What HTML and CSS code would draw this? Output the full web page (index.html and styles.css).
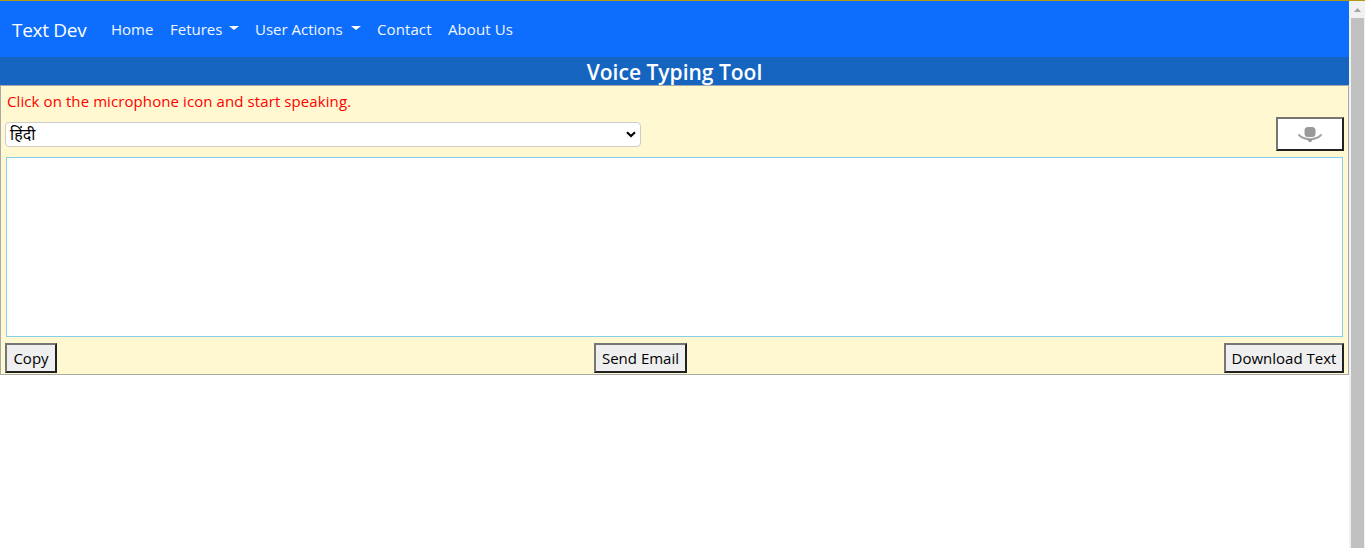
FILE: index.html
```html
<!DOCTYPE html>
<html lang="en">
<head>
<meta charset="utf-8">
<title>Voice Typing Tool</title>
<link rel="stylesheet" href="styles.css">
</head>
<body>
<div class="window">
  <main class="page">
    <nav class="navbar">
      <a class="brand">Text Dev</a>
      <a class="link home">Home</a>
      <a class="link features"><span>Fetures</span><i class="caret"></i></a>
      <a class="link actions"><span>User Actions</span><i class="caret"></i></a>
      <a class="link contact">Contact</a>
      <a class="link about">About Us</a>
    </nav>
    <h1 class="title"><span>Voice Typing Tool</span></h1>
    <section class="tool">
      <p class="hint">Click on the microphone icon and start speaking.</p>
      <div class="controls">
        <div class="select"><span class="language">हिंदी</span>
          <svg width="10" height="7" viewBox="0 0 10 7"><path d="M1 1.2 5 5.1 9 1.2" fill="none" stroke="#000" stroke-width="2.1"/></svg>
        </div>
        <button class="btn mic">
          <svg width="26" height="18" viewBox="0 0 26 18"><rect x="7.500" y="2" width="11" height="10" rx="3.500" fill="#999"/><path d="M2 10C7 15.500 19 15.500 24 10" fill="none" stroke="#a3a3a3" stroke-width="2" stroke-linecap="round"/><path d="M11 14h4v1.500l-1 1.500h-2l-1-1.500z" fill="#999"/></svg>
        </button>
      </div>
      <div class="editor"></div>
      <div class="actions-row">
        <button class="btn copy">Copy</button>
        <button class="btn send">Send Email</button>
        <button class="btn download">Download Text</button>
      </div>
    </section>
  </main>
  <aside class="scrollbar">
    <svg class="arrow" width="7" height="4" viewBox="0 0 7 4"><path d="M0 4 3.500 0 7 4z" fill="#a3a3a3"/></svg>
    <div class="thumb"></div>
  </aside>
</div>
</body>
</html>
```
FILE: styles.css
```css
* { box-sizing: border-box; }
body {
  margin: 0;
  overflow: hidden;
  background: #fff;
  font-family: "Open Sans", "Noto Sans", sans-serif;
  font-size: 15px;
}
.window { display: flex; height: 548px; border-top: 1px solid #b39a10; }
.page { width: 1349px; flex: none; }
.navbar {
  display: flex;
  align-items: center;
  height: 56px;
  padding: 0 12px;
  background: #0d6efd;
  color: #fff;
  white-space: nowrap;
}
.brand { width: 75px; margin-right: 24px; padding-top: 2px; font-size: 19px; line-height: 30px; letter-spacing: -.3px; }
.link { display: flex; align-items: center; justify-content: space-between; margin-right: 16px; line-height: 24px; color: #f2f7ff; letter-spacing: 0; }
.home { width: 43px; }
.features { width: 69px; }
.actions { width: 106px; }
.contact { width: 55px; letter-spacing: .1px; }
.about { width: 66px; letter-spacing: .1px; }
.caret { border: 5px solid transparent; border-top: 4px solid #fff; border-bottom: 0; margin-top: -2px; }
.title {
  display: flex;
  justify-content: center;
  height: 28px;
  margin: 0;
  background: #1565c0;
  color: #fff;
  font-size: 21px;
  font-weight: 600;
  line-height: 31px;
  white-space: nowrap;
}
.tool { height: 290px; padding: 0 4px; border: 1px solid #a9a9a9; background: #fff8d0; }
.hint { margin: 0; padding: 3px 2px 4px; color: #f00; line-height: 24px; letter-spacing: .09px; white-space: nowrap; }
.controls { display: flex; justify-content: space-between; align-items: center; height: 34px; }
.select {
  display: flex;
  align-items: center;
  justify-content: space-between;
  width: 636px;
  height: 25px;
  padding: 0 4px;
  border: 1px solid #ccc;
  border-radius: 4px;
  background: #fff;
}
.language { font-size: 16px; line-height: 23px; }
.btn {
  height: 30px;
  padding: 0;
  border: 2px solid;
  border-color: #767676 #212121 #212121 #767676;
  background: #efefef;
  color: #000;
  font: inherit;
  line-height: 26px;
  white-space: nowrap;
}
.mic { display: flex; justify-content: center; align-items: center; width: 68px; height: 34px; background: #fff; }
.editor { height: 180px; margin: 6px 1px; border: 1px solid #87ceeb; background: #fff; }
.actions-row { display: flex; justify-content: space-between; }
.copy { width: 52px; }
.send { width: 93px; }
.download { width: 120px; }
.scrollbar { display: flex; flex-direction: column; align-items: center; width: 16px; padding: 7px 1px 0 2px; background: #f1f1f1; }
.arrow { flex: none; margin-bottom: 6px; }
.thumb { width: 13px; flex: 1; background: #c1c1c1; }
```
